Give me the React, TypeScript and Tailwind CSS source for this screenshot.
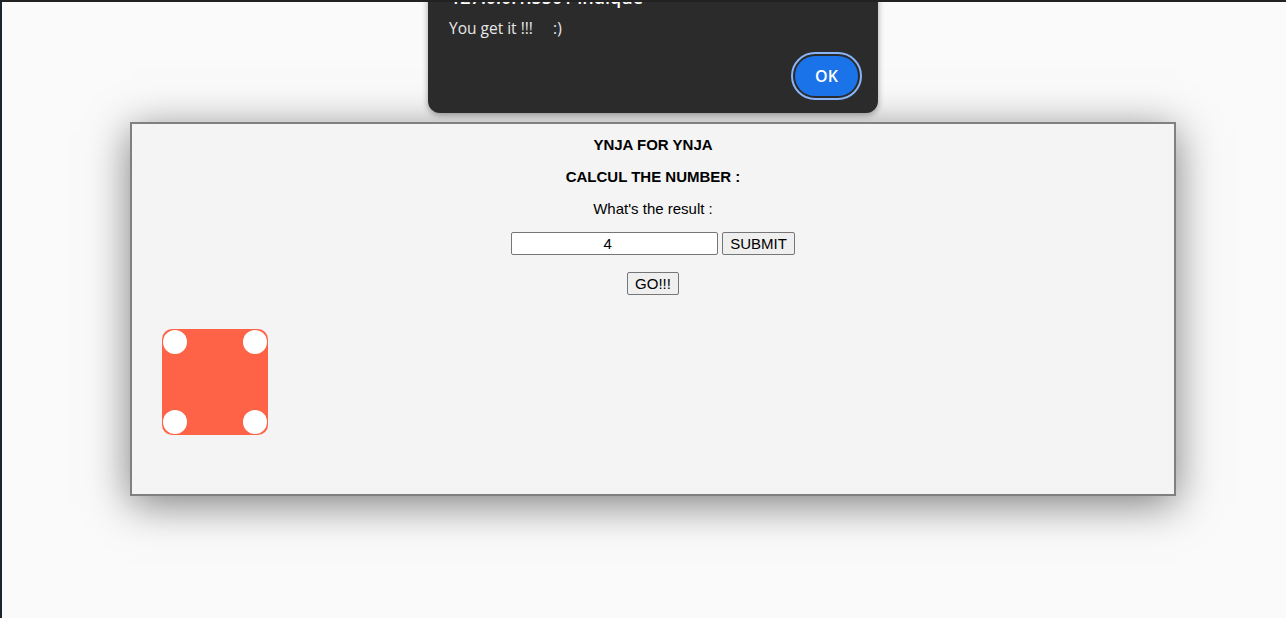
import React from 'react';

export default function App() {
  return (
    <div className="relative w-full h-screen overflow-hidden bg-[#fafafa] border-t-2 border-l-2 border-t-[#222222] border-l-[#1b2630]">
      {/* Game card */}
      <div className="ml-[128px] mt-[120px] w-[1046px] h-[374px] bg-[#f4f4f4] border-2 border-[#808080] shadow-[0_8px_40px_rgba(0,0,0,0.5)] flex flex-col items-center pt-3 font-['Liberation_Sans',Arial,sans-serif] text-[15px] text-black">
        <p className="font-bold leading-[17px]">YNJA FOR YNJA</p>
        <p className="font-bold leading-[17px] mt-[15px]">CALCUL THE NUMBER :</p>
        <p className="leading-[17px] mt-[15px]">What's the result :</p>
        <div className="flex items-center gap-1 mt-[15px]">
          <input
            readOnly
            value="4"
            className="w-[207px] h-[23px] bg-white border border-[#767676] rounded-[2px] text-center text-[15px] pr-[14px] outline-none"
          />
          <button className="h-[23px] px-[7px] bg-[#efefef] border border-[#767676] rounded-[2px] text-[15px] leading-none">SUBMIT</button>
        </div>
        <button className="mt-[17px] h-[23px] px-[7px] bg-[#efefef] border border-[#767676] rounded-[2px] text-[15px] leading-none">GO!!!</button>

        <div className="self-start ml-[30px] mt-[34px] w-[106px] h-[106px] rounded-[10px] bg-[#ff6347] p-px grid grid-cols-2 grid-rows-2">
          <span className="w-6 h-6 rounded-full bg-white" />
          <span className="w-6 h-6 rounded-full bg-white justify-self-end" />
          <span className="w-6 h-6 rounded-full bg-white self-end" />
          <span className="w-6 h-6 rounded-full bg-white self-end justify-self-end" />
        </div>
      </div>

      {/* Browser alert */}
      <div className="absolute left-[426px] top-[-40px] w-[450px] h-[151px] bg-[#2b2b2b] rounded-xl shadow-[0_2px_6px_rgba(0,0,0,0.35)] font-['Open_Sans','Noto_Sans',sans-serif] text-[#e8e8e8]">
        <p className="absolute left-[22px] top-[25px] text-[18px] font-semibold text-white leading-[20px]">127.0.0.1:5501 indique</p>
        <p className="absolute left-[21px] top-[56px] text-[15.5px] leading-[20px] whitespace-pre">You get it !!!     :)</p>
        <div className="absolute right-[16px] bottom-[13px] w-[71px] h-[48px] rounded-full border-2 border-[#8ab4f8] p-[2px]">
          <button className="w-full h-full rounded-full bg-[#1a73e8] text-white text-[16px] font-semibold">OK</button>
        </div>
      </div>
    </div>
  );
}
